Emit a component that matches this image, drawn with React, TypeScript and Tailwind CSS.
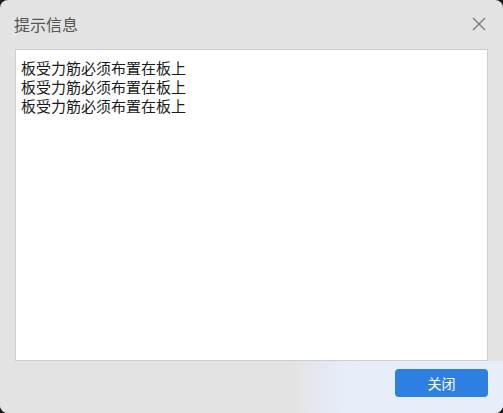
import React from 'react';

const lines = ['板受力筋必须布置在板上', '板受力筋必须布置在板上', '板受力筋必须布置在板上'];

const App: React.FC = () => {
    return (
        <div className="w-[503px] h-[413px] bg-[#1c1c1c] font-['Microsoft_YaHei','Noto_Sans_CJK_SC',sans-serif]">
            <div className="w-full h-full rounded-[8px] bg-[#e3e3e3] flex flex-col overflow-hidden">
                <div className="h-[49px] flex items-start justify-between pl-[14px] pr-[16px] pt-[13px]">
                    <span className="text-[16px] leading-[22px] text-[#555]">提示信息</span>
                    <svg width="16" height="16" viewBox="0 0 16 16" className="mt-[3px]">
                        <path d="M2 2 L14 14 M14 2 L2 14" stroke="#7a7a7a" strokeWidth="1.4" fill="none" />
                    </svg>
                </div>
                <div className="mx-[15px] h-[312px] bg-white border border-[#cfcfcf] px-[5px] pt-[8px]">
                    {lines.map((line, i) => (
                        <div key={i} className="text-[15px] leading-[19px] text-[#1a1a1a]">{line}</div>
                    ))}
                </div>
                <div className="flex-1 flex justify-end items-start pt-[8px] pr-[15px] bg-[linear-gradient(to_right,#e3e3e3_0%,#e3e3e3_58%,#e6edf9_68%,#e8eef9_100%)]">
                    <button className="w-[93px] h-[28px] rounded-[4px] bg-[#2d7fe0] text-white text-[14px] leading-[28px]">关闭</button>
                </div>
            </div>
        </div>
    );
};

export default App;
